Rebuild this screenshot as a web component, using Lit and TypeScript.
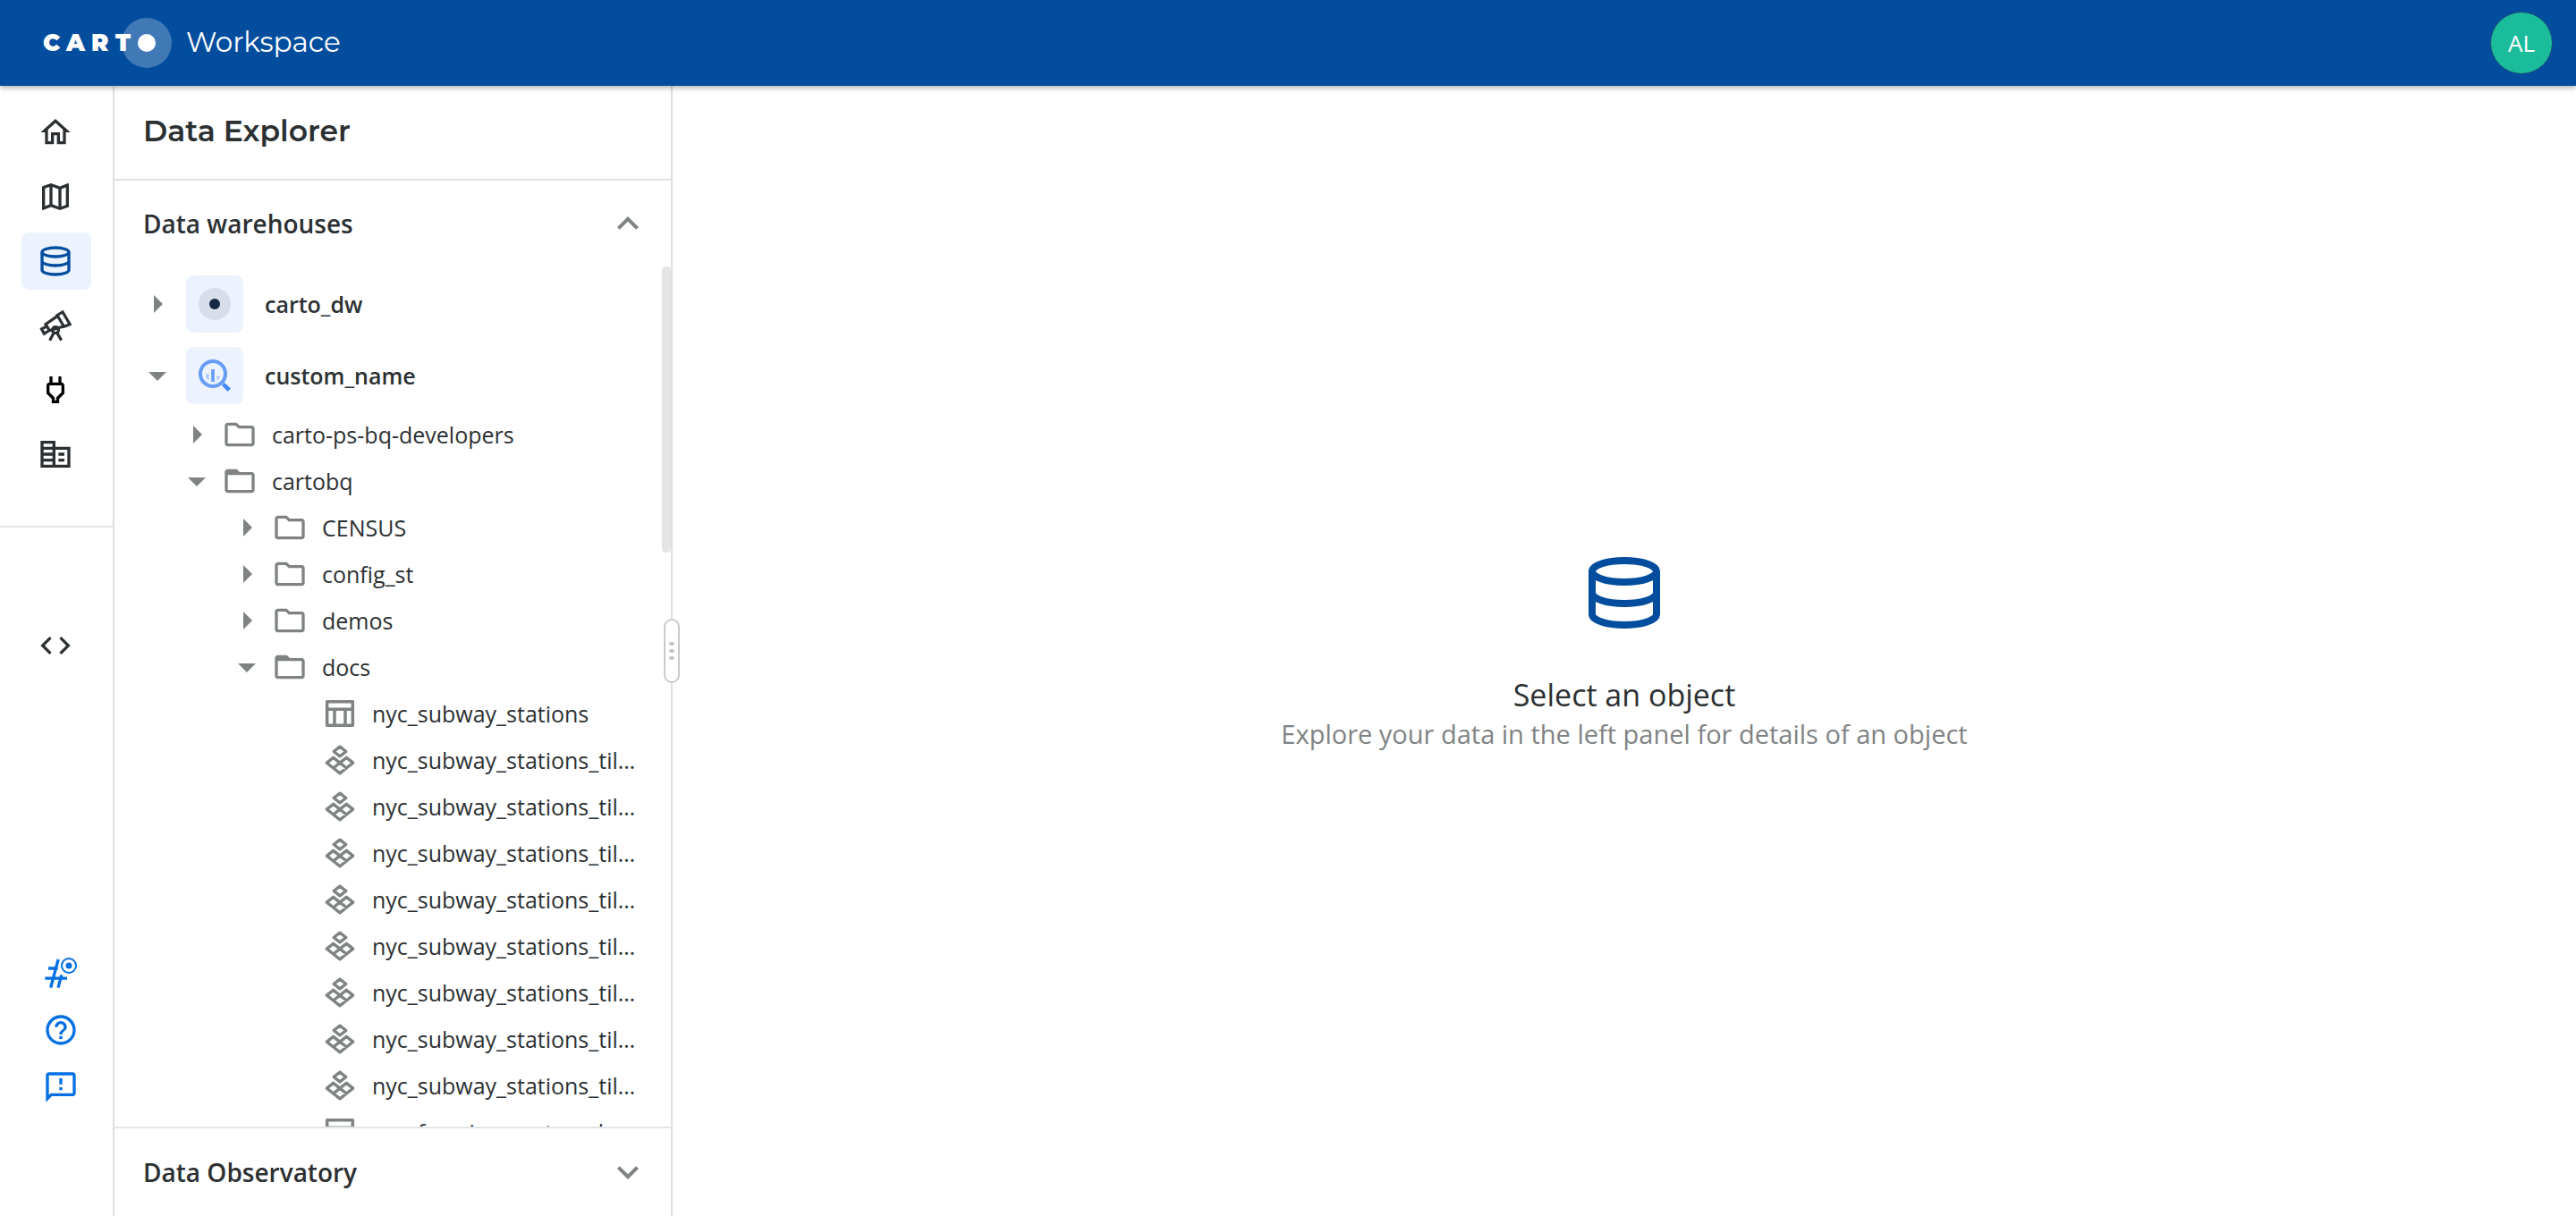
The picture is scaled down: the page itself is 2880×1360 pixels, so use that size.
import { LitElement, html, css, svg, nothing } from "lit";
import { customElement, property, state } from "lit/decorators.js";
import { classMap } from "lit/directives/class-map.js";

const ICONS: Record<string, unknown> = {
  home: svg`<path d="M12 5.69l5 4.5V18h-2v-6H9v6H7v-7.81l5-4.5M12 3L2 12h3v8h6v-6h2v6h6v-8h3L12 3z"/>`,
  map: svg`<path d="M20.5 3l-.16.03L15 5.1 9 3 3.36 4.9c-.21.07-.36.25-.36.48V20.5c0 .28.22.5.5.5l.16-.03L9 18.9l6 2.1 5.64-1.9c.21-.07.36-.25.36-.48V3.5c0-.28-.22-.5-.5-.5zM10 5.47l4 1.4v11.66l-4-1.4V5.47zm-5 .99l3-1.01v11.7l-3 1.16V6.46zm14 11.08l-3 1.01V6.86l3-1.16v11.84z"/>`,
  database: svg`<g fill="none" stroke="currentColor" stroke-width="2"><ellipse cx="12" cy="6" rx="9" ry="3"/><path d="M3 6v12c0 1.66 4.03 3 9 3s9-1.34 9-3V6M3 12c0 1.66 4.03 3 9 3s9-1.34 9-3"/></g>`,
  telescope: svg`<g fill="none" stroke="currentColor" stroke-width="1.9"><path d="M13.2 5.1l3.6-2.1 4.9 8.2-4 1.6zM13.4 5.6L5.4 11.2l2.6 4.2 9.4-2.8M6.2 12.6l-3.5 1.7 1.7 3.2 3.6-2.2"/><circle cx="12" cy="15" r="2.1"/><path d="M10.9 17l-2.7 5M13.1 17l2.9 5"/></g>`,
  plug: svg`<path d="M16 9v4.66l-3.5 3.51V19h-1v-1.83L8 13.65V9h8m0-6h-2v4h-4V3H8v4h-.01C6.9 6.99 6 7.89 6 8.98v5.52L9.5 18v3h5v-3l3.5-3.51V9c0-1.1-.9-2-2-2V3z"/>`,
  building: svg`<path d="M12 7V3H2v18h20V7H12zM10 19H4v-2h6v2zm0-4H4v-2h6v2zm0-4H4V9h6v2zm0-4H4V5h6v2zm10 12h-8V9h8v10zm-2-8h-4v2h4v-2zm0 4h-4v2h4v-2z"/>`,
  code: svg`<path d="M9.4 16.6L4.8 12l4.6-4.6L8 6l-6 6 6 6 1.4-1.4zm5.2 0l4.6-4.6-4.6-4.6L16 6l6 6-6 6-1.4-1.4z"/>`,
  channel: svg`<g fill="none" stroke="currentColor"><path stroke-width="2" d="M10.3 3L5.2 22M12.5 13.4L10.2 22M3.6 9h6.4M1.4 15.7h14.8"/><circle cx="17.4" cy="7.2" r="4.8" stroke-width="1.2"/></g><circle cx="17.4" cy="7.2" r="2.1"/>`,
  help: svg`<path d="M11 18h2v-2h-2v2zm1-16C6.48 2 2 6.48 2 12s4.48 10 10 10 10-4.48 10-10S17.52 2 12 2zm0 18c-4.41 0-8-3.59-8-8s3.59-8 8-8 8 3.59 8 8-3.59 8-8 8zm0-14c-2.21 0-4 1.79-4 4h2c0-1.1.9-2 2-2s2 .9 2 2c0 2-3 1.75-3 5h2c0-2.25 3-2.5 3-5 0-2.21-1.79-4-4-4z"/>`,
  feedback: svg`<path d="M20 2H4c-1.1 0-1.99.9-1.99 2L2 22l4-4h14c1.1 0 2-.9 2-2V4c0-1.1-.9-2-2-2zm0 14H5.17l-.59.59-.58.58V4h16v12zm-9-4h2v2h-2zm0-6h2v4h-2z"/>`,
  right: svg`<path d="M10 17l5-5-5-5v10z"/>`,
  down: svg`<path d="M7 10l5 5 5-5z"/>`,
  less: svg`<path d="M12 8l-6 6 1.41 1.41L12 10.83l4.59 4.58L18 14z"/>`,
  more: svg`<path d="M16.59 8.59L12 13.17 7.41 8.59 6 10l6 6 6-6z"/>`,
  folder: svg`<path d="M9.17 6l2 2H20v10H4V6h5.17M10 4H4c-1.1 0-1.99.9-1.99 2L2 18c0 1.1.9 2 2 2h16c1.1 0 2-.9 2-2V8c0-1.1-.9-2-2-2h-8l-2-2z"/>`,
  folderOpen: svg`<path d="M20 6h-8l-2-2H4c-1.1 0-1.99.9-1.99 2L2 18c0 1.1.9 2 2 2h16c1.1 0 2-.9 2-2V8c0-1.1-.9-2-2-2zm0 12H4V8h16v10z"/>`,
  table: svg`<path fill="none" stroke="currentColor" stroke-width="2.1" stroke-linejoin="round" d="M3.4 4h17.2v16H3.4zM3.4 9.2h17.2M8.4 9.2V20M15.6 9.2V20"/>`,
  tileset: svg`<path fill="none" stroke="currentColor" stroke-width="2" stroke-linejoin="round" d="M12 3.1l4.1 3.2L12 9.5 7.9 6.3zM7.6 10.4l4.4 3.5-4.4 3.5-4.4-3.5zM16.4 10.4l4.4 3.5-4.4 3.5-4.4-3.5zM7.6 17.4l4.4 3.5 4.4-3.5"/>`,
};

const icon = (name: string) =>
  html`<svg class="icon" viewBox="0 0 24 24" fill="currentColor" aria-hidden="true">${ICONS[name]}</svg>`;

const base = css`
  *, *::before, *::after { box-sizing: border-box; }
  button { font: inherit; color: inherit; background: none; border: 0; padding: 0; margin: 0; cursor: pointer; text-align: left; }
  a { color: inherit; text-decoration: none; }
  h1, h2, p, ul { margin: 0; padding: 0; }
  li { list-style: none; }
  .icon { display: block; flex: none; width: 40px; height: 40px; }
`;

@customElement("app-topbar")
class AppTopbar extends LitElement {
  static styles = [base, css`
    :host { display: block; position: relative; z-index: 2; }
    .bar { display: flex; align-items: center; justify-content: space-between; height: 96px; padding: 0 26px 0 48px; background: #024d9e; color: #fff; box-shadow: 0 2px 6px rgba(44, 48, 50, 0.4); }
    .brand { display: flex; align-items: center; gap: 16px; }
    .logo { display: block; width: 144px; height: 56px; }
    .wordmark { font: 900 26px Montserrat, Lato, sans-serif; }
    .product { padding-bottom: 2px; font: 400 31px/40px Montserrat, Lato, sans-serif; }
    .avatar { width: 70px; height: 70px; border: 1px solid #1b4a78; border-radius: 50%; background: #1abc9c; font: 400 26px/40px "Open Sans", sans-serif; text-align: center; }
  `];
  render() {
    return html`<header class="bar">
      <a class="brand" href="#home">
        <svg class="logo" viewBox="0 0 144 56" fill="#fff" role="img" aria-label="CARTO">
          <circle cx="116" cy="28" r="28" opacity="0.25"/>
          <circle cx="116" cy="28" r="10"/>
          <text class="wordmark" x="0 26 54 81" y="37">CART</text>
        </svg>
        <span class="product">Workspace</span>
      </a>
      <button class="avatar">AL</button>
    </header>`;
  }
}

@customElement("app-rail")
class AppRail extends LitElement {
  @state() active = "Data Explorer";
  static styles = [base, css`
    :host { display: block; }
    .rail { display: flex; flex-direction: column; width: 128px; height: 100%; border-right: 2px solid #e0e0e0; color: #2c3032; }
    .group { display: flex; flex-direction: column; gap: 8px; padding: 20px 24px 48px; border-bottom: 2px solid #e4e4e4; }
    .item { display: flex; align-items: center; width: 78px; height: 64px; padding-left: 18px; border-radius: 8px; }
    .item.active { background: #ecf3fe; color: #024d9e; }
    .item.ink { color: #000; }
    .dev { padding: 100px 24px 0; }
    .support { display: flex; flex-direction: column; gap: 24px; margin-top: auto; padding: 0 48px 124px; color: #036fe2; }
  `];
  render() {
    const items = [["Home", "home"], ["Maps", "map"], ["Data Explorer", "database"], ["Data Observatory", "telescope"], ["Connections", "plug"], ["Organization", "building"]];
    return html`<nav class="rail">
      <div class="group">${items.map(([label, glyph]) => html`
        <a class=${classMap({ item: true, active: this.active === label, ink: glyph === "plug" })} href="#${glyph}" aria-label=${label} @click=${() => (this.active = label)}>${icon(glyph)}</a>`)}
      </div>
      <div class="dev"><a class="item" href="#developers" aria-label="Developers">${icon("code")}</a></div>
      <div class="support">
        <a href="#channel" aria-label="Community">${icon("channel")}</a>
        <a href="#help" aria-label="Help">${icon("help")}</a>
        <a href="#feedback" aria-label="Feedback">${icon("feedback")}</a>
      </div>
    </nav>`;
  }
}

interface Node { name: string; kind: string; open?: boolean; children?: Node[]; }

const tileset = (): Node => ({ name: "nyc_subway_stations_tileset", kind: "tileset" });

const TREE: Node[] = [
  { name: "carto_dw", kind: "carto" },
  { name: "custom_name", kind: "bigquery", open: true, children: [
    { name: "carto-ps-bq-developers", kind: "folder" },
    { name: "cartobq", kind: "folder", open: true, children: [
      { name: "CENSUS", kind: "folder" },
      { name: "config_st", kind: "folder" },
      { name: "demos", kind: "folder" },
      { name: "docs", kind: "folder", open: true, children: [
        { name: "nyc_subway_stations", kind: "table" },
        ...Array.from({ length: 8 }, tileset),
        { name: "nyc_free_in_use_travel", kind: "table" },
      ] },
    ] },
  ] },
];

@customElement("object-tree")
class ObjectTree extends LitElement {
  @property({ attribute: false }) nodes: Node[] = [];
  static styles = [base, css`
    :host { display: block; padding-top: 2px; color: #2c3032; font: 400 25px/40px "Open Sans", sans-serif; }
    .row { display: flex; align-items: center; width: 100%; height: 52px; padding-right: 36px; }
    .row.source { height: 80px; padding-left: 24px; font-weight: 600; }
    .row.level1 { padding-left: 68px; }
    .row.level2 { padding-left: 124px; }
    .row.level3 { padding-left: 232px; }
    .caret { flex: none; margin-right: 4px; color: #7f8383; }
    .caret .icon { width: 48px; height: 48px; }
    .source .caret { margin-right: 8px; }
    .kind { flex: none; margin-right: 16px; color: #7f8383; }
    .badge { display: grid; place-items: center; flex: none; width: 64px; height: 64px; margin-right: 24px; border-radius: 8px; background: #ecf3fe; }
    .name { min-width: 0; overflow: hidden; text-overflow: ellipsis; white-space: nowrap; }
  `];
  private toggle(node: Node) { node.open = !node.open; this.requestUpdate(); }
  private glyph(node: Node) {
    if (node.kind === "carto") return html`<span class="badge"><svg class="icon" viewBox="0 0 40 40"><circle cx="20" cy="20" r="18" fill="#d8dde9"/><circle cx="20" cy="20" r="6" fill="#162945"/></svg></span>`;
    if (node.kind === "bigquery") return html`<span class="badge"><svg class="icon" viewBox="0 0 40 40">
      <path d="M28 31l3-3 7 6.5-3.5 3.5z" fill="#4386fa"/>
      <circle cx="18" cy="18" r="14" fill="none" stroke="#669df6" stroke-width="4"/>
      <path d="M10.5 18h3v7.5c-1.2-.7-2.3-1.8-3-3zM22.5 20.5h3v2c-.7 1.2-1.8 2.3-3 3z" fill="#aecbfa"/>
      <path d="M16.2 13h3.6v14h-3.6z" fill="#669df6"/></svg></span>`;
    return html`<span class="kind">${icon(node.kind === "folder" && node.open ? "folderOpen" : node.kind)}</span>`;
  }
  private branch(nodes: Node[], level: number): unknown {
    return html`<ul>${nodes.map((node) => html`<li>
      <button class=${classMap({ row: true, source: level === 0, [`level${level}`]: true })} @click=${() => this.toggle(node)}>
        ${level < 3 ? html`<span class="caret">${icon(node.open ? "down" : "right")}</span>` : nothing}
        ${this.glyph(node)}<span class="name">${node.name}</span>
      </button>
      ${node.open && node.children ? this.branch(node.children, level + 1) : nothing}
    </li>`)}</ul>`;
  }
  render() { return this.branch(this.nodes, 0); }
}

@customElement("explorer-panel")
class ExplorerPanel extends LitElement {
  static styles = [base, css`
    :host { display: block; position: relative; }
    .panel { display: flex; flex-direction: column; width: 624px; height: 100%; border-right: 2px solid #e0e0e0; color: #2c3032; }
    .title { padding: 30px 32px 34px; border-bottom: 2px solid #e0e0e0; font: 600 33px/40px Montserrat, Lato, sans-serif; }
    .section { display: flex; align-items: center; justify-content: space-between; flex: none; width: 100%; height: 96px; padding: 0 24px 0 32px; font: 600 28px/48px "Open Sans", sans-serif; }
    .section .icon { width: 48px; height: 48px; color: #7f8383; }
    .foot { border-top: 2px solid #e4e6e6; height: 100px; }
    .scroll { flex: 1; min-width: 0; min-height: 0; overflow-y: auto; scrollbar-width: none; }
    .body { display: flex; flex: 1; min-height: 0; position: relative; }
    .thumb { position: absolute; top: 0; right: 0; width: 10px; height: 320px; border-radius: 4px; background: #e4e6e6; }
    .grip { position: absolute; top: 50%; right: -8px; display: flex; flex-direction: column; align-items: center; justify-content: center; gap: 4px; width: 18px; height: 72px; margin-top: -36px; border: 2px solid #cacaca; border-radius: 9px; background: #fff; cursor: col-resize; }
    .dot { width: 6px; height: 4px; border-radius: 2px; background: #c4c6c6; }
  `];
  render() {
    return html`<aside class="panel">
      <h1 class="title">Data Explorer</h1>
      <button class="section">Data warehouses ${icon("less")}</button>
      <div class="body">
        <div class="scroll"><object-tree .nodes=${TREE}></object-tree></div>
        <div class="thumb"></div>
      </div>
      <button class="section foot">Data Observatory ${icon("more")}</button>
    </aside>
    <button class="grip" aria-label="Resize panel"><span class="dot"></span><span class="dot"></span><span class="dot"></span></button>`;
  }
}

@customElement("app-root")
class AppRoot extends LitElement {
  static styles = [base, css`
    :host { display: flex; flex-direction: column; height: 100vh; background: #fff; }
    .content { display: flex; flex: 1; min-height: 0; }
    .empty { display: flex; flex: 1; flex-direction: column; align-items: center; justify-content: center; text-align: center; font-family: "Open Sans", sans-serif; }
    .empty .icon { width: 96px; height: 96px; margin-bottom: 42px; color: #024d9e; }
    .heading { font-size: 34px; font-weight: 400; line-height: 48px; color: #2c3032; }
    .hint { font-size: 29px; line-height: 40px; color: #7f8383; }
  `];
  render() {
    return html`<app-topbar></app-topbar>
      <div class="content">
        <app-rail></app-rail>
        <explorer-panel></explorer-panel>
        <main class="empty">
          ${icon("database")}
          <h2 class="heading">Select an object</h2>
          <p class="hint">Explore your data in the left panel for details of an object</p>
        </main>
      </div>`;
  }
}
